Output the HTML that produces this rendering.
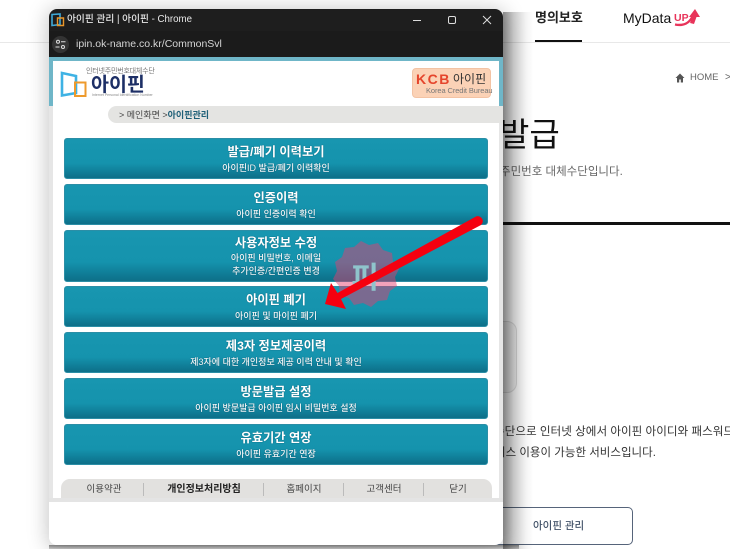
<!DOCTYPE html>
<html lang="ko">
<head>
<meta charset="utf-8">
<title>아이핀 관리</title>
<style>
html,body{margin:0;padding:0;width:730px;height:549px;overflow:hidden;background:#fff;}
body{position:relative;font-family:"Liberation Sans","Noto Sans CJK KR",sans-serif;filter:blur(.35px);}
.a{position:absolute;white-space:nowrap;line-height:1;}
.c{transform:translateX(-50%);}
#win{position:absolute;left:49px;top:9px;width:454px;height:536px;border-radius:8px;overflow:hidden;background:#fff;}
#shadow{position:absolute;left:49px;top:9px;width:454px;height:536px;border-radius:8px;box-shadow:0 2px 20px 2px rgba(0,0,0,.22);}
#rs{position:absolute;left:503px;top:12px;width:30px;height:537px;background:linear-gradient(90deg,rgba(0,0,0,.42),rgba(0,0,0,.2) 35%,rgba(0,0,0,.05) 75%,rgba(0,0,0,0));}
#bs{position:absolute;left:49px;top:545px;width:470px;height:4px;background:linear-gradient(rgba(0,0,0,.45),rgba(0,0,0,.18));}
.btn{position:absolute;left:64px;width:424px;border-radius:3px;box-sizing:border-box;background:linear-gradient(#1896b0 0,#1593ad 62%,#0f7a94 88%,#0e6f88 100%);border:1px solid #2b8ea6;text-align:center;color:#fff;}
.btn b{display:block;font-size:12.25px;font-weight:700;line-height:15px;margin-top:6px;text-shadow:0 0 1px rgba(0,50,70,.7);}
.btn span{display:block;font-size:9px;font-weight:500;line-height:13px;margin-top:2px;color:#f0f6f8;text-shadow:0 0 1px rgba(0,50,70,.7);}
.btn.t b{margin-top:5px;}
.btn.t span{margin-top:1px;}
.ft{color:#444;font-size:9.5px;top:485px;}
.sep{position:absolute;top:483px;width:1px;height:13px;background:#bbb;}
</style>
</head>
<body>
<!-- background page -->
<div class="a" style="left:535px;top:11px;font-size:13px;font-weight:700;color:#222;">명의보호</div>
<div style="position:absolute;left:535px;top:40px;width:47px;height:2px;background:#111;"></div>
<div style="position:absolute;left:0;top:42px;width:730px;height:1px;background:#e8e8e8;"></div>
<div class="a" style="left:623px;top:11px;font-size:14px;color:#111;">MyData</div>
<div class="a" style="left:674px;top:13px;font-size:10.5px;font-weight:700;color:#e8345a;">UP</div>
<svg style="position:absolute;left:674px;top:8px" width="28" height="19" viewBox="0 0 28 19"><path d="M1 16.500C9 18 16 15.500 19 7" fill="none" stroke="#e8345a" stroke-width="2.400"/><path d="M21 1l5 8h-3.500l-2.500 7-4-1 2.500-6H15z" fill="#e8345a"/></svg>
<svg style="position:absolute;left:675px;top:73px" width="10" height="10" viewBox="0 0 10 10"><path d="M5 .5 .5 5H2v4.500h2.200V6.500h1.600v3H8V5h1.500z" fill="#555"/></svg>
<div class="a" style="left:690px;top:73px;font-size:9.500px;color:#666;">HOME</div>
<div class="a" style="left:725px;top:73px;font-size:10px;color:#666;">&gt;</div>
<div class="a" style="left:499px;top:118px;font-size:33px;color:#111;">발급</div>
<div class="a" style="left:500px;top:167px;font-size:11.5px;color:#666;">주민번호 대체수단입니다.</div>
<div style="position:absolute;left:500px;top:222px;width:230px;height:3px;background:#111;"></div>
<div style="position:absolute;left:480px;top:321px;width:37px;height:72px;border:1px solid #ddd;border-radius:10px;box-sizing:border-box;background:#f4f4f4;"></div>
<div class="a" style="left:494px;top:426px;font-size:11.6px;color:#333;">수단으로 인터넷 상에서 아이핀 아이디와 패스워드</div>
<div class="a" style="left:495px;top:448px;font-size:11.5px;color:#333;">비스 이용이 가능한 서비스입니다.</div>
<div style="position:absolute;left:470px;top:507px;width:163px;height:38px;border:1.500px solid #56647a;border-radius:5px;box-sizing:border-box;background:#fff;"></div>
<div class="a" style="left:533px;top:521px;font-size:10.5px;font-weight:500;color:#44546a;">아이핀 관리</div>

<div id="shadow"></div>
<div id="rs"></div>
<div id="bs"></div>
<!-- popup window -->
<div id="win">
  <div style="position:absolute;left:0;top:0;width:454px;height:48px;background:#1e1e1e;"></div>
  <div style="position:absolute;left:0;top:22px;width:454px;height:26px;background:#1b1b1b;"></div>
  <div style="position:absolute;left:0;top:48px;width:454px;height:50px;background:#6fb6c8;"></div>
  <div style="position:absolute;left:4px;top:52px;width:446px;height:46px;background:#fff;"></div>
  <div style="position:absolute;left:0;top:97px;width:454px;height:393px;background:#e6e6e6;"></div>
  <div style="position:absolute;left:4px;top:97px;width:446px;height:392px;background:#fff;"></div>
  <div style="position:absolute;left:59px;top:97px;width:395px;height:17px;background:#e4e4e2;border-radius:9px 0 0 9px;"></div>
</div>
<svg style="position:absolute;left:51px;top:13px" width="14" height="14" viewBox="0 0 14 14"><path d="M1 1.500 9 1v10.500L1 12.500z" fill="none" stroke="#3fa9d8" stroke-width="1.600"/><path d="M6.500 5H12.500V12.500H6.500z" fill="none" stroke="#e8962a" stroke-width="1.400"/></svg>
<div class="a" style="left:67px;top:15px;font-size:9.700px;font-weight:500;color:#e8e8e8;">아이핀 관리 | 아이핀 - Chrome</div>
<svg style="position:absolute;left:410px;top:12px" width="86" height="16" viewBox="0 0 86 16" fill="none" stroke="#ddd" stroke-width="1"><path d="M3 8.500H11"/><rect x="38.500" y="4.500" width="7" height="7" rx="1.500"/><path d="M73 4l8 8M81 4l-8 8"/></svg>
<div style="position:absolute;left:52px;top:36px;width:17px;height:17px;border-radius:50%;background:#343434;"></div>
<svg style="position:absolute;left:55px;top:39px" width="11" height="11" viewBox="0 0 11 11" fill="none" stroke="#ddd" stroke-width="1"><circle cx="3" cy="2.800" r="1.500"/><path d="M6 2.800h4.500M.5 8h4"/><circle cx="8" cy="8" r="1.500"/></svg>
<div class="a" style="left:76px;top:39px;font-size:10.500px;color:#d6d6d6;">ipin.ok-name.co.kr/CommonSvl</div>

<!-- logo -->
<svg style="position:absolute;left:60px;top:71px" width="28" height="27" viewBox="0 0 28 27" fill="none"><path d="M2 2 16 5V22L2 24.500z" stroke="#3eb2e4" stroke-width="2.600"/><path d="M15 11.500H25.500V25H15z" stroke="#ee9a2c" stroke-width="2"/></svg>
<div class="a" style="left:86px;top:68px;font-size:7px;color:#777;letter-spacing:-.2px;">인터넷주민번호대체수단</div>
<div class="a" style="left:91px;top:76px;font-size:19.500px;font-weight:700;color:#1d2f66;">아이핀</div>
<div class="a" style="left:92px;top:94px;font-size:3.500px;color:#888;">Internet Personal Identification Number</div>
<!-- KCB -->
<div style="position:absolute;left:412px;top:68px;width:79px;height:30px;border-radius:4px;background:#fbd2b6;border:1px solid #f3c3a4;box-sizing:border-box;"></div>
<div class="a" style="left:416px;top:72px;font-size:14px;font-weight:700;color:#e5452c;letter-spacing:1.500px;">KCB</div>
<div class="a" style="left:453px;top:73px;font-size:12px;color:#333;">아이핀</div>
<div class="a" style="left:426px;top:87px;font-size:7.500px;color:#777;letter-spacing:-.1px;">Korea Credit Bureau</div>
<!-- breadcrumb -->
<div class="a" style="left:119px;top:111px;font-size:9px;color:#444;">&gt; 메인화면 &gt;<b style="color:#1d5f78;">아이핀관리</b></div>

<div class="btn" style="top:138px;height:41px;"><b>발급/폐기 이력보기</b><span>아이핀ID 발급/폐기 이력확인</span></div>
<div class="btn" style="top:184px;height:41px;"><b>인증이력</b><span>아이핀 인증이력 확인</span></div>
<div class="btn t" style="top:230px;height:52px;"><b>사용자정보 수정</b><span>아이핀 비밀번호, 이메일<br>추가인증/간편인증 변경</span></div>
<div class="btn" style="top:286px;height:41px;"><b>아이핀 폐기</b><span>아이핀 및 마이핀 폐기</span></div>
<div class="btn" style="top:332px;height:41px;"><b>제3자 정보제공이력</b><span>제3자에 대한 개인정보 제공 이력 안내 및 확인</span></div>
<div class="btn" style="top:378px;height:41px;"><b>방문발급 설정</b><span>아이핀 방문발급 아이핀 임시 비밀번호 설정</span></div>
<div class="btn" style="top:424px;height:41px;"><b>유효기간 연장</b><span>아이핀 유효기간 연장</span></div>

<!-- footer -->
<div style="position:absolute;left:61px;top:479px;width:431px;height:19px;background:#e2e1df;border-radius:9px 9px 0 0;"></div>
<div style="position:absolute;left:49px;top:498px;width:454px;height:4px;background:#e4e4e4;"></div>
<div class="a c ft" style="left:104px;">이용약관</div>
<div class="a c ft" style="left:204px;font-weight:700;font-size:10px;color:#222;">개인정보처리방침</div>
<div class="a c ft" style="left:304px;">홈페이지</div>
<div class="a c ft" style="left:384px;">고객센터</div>
<div class="a c ft" style="left:458px;">닫기</div>
<div class="sep" style="left:143px"></div><div class="sep" style="left:263px"></div><div class="sep" style="left:343px"></div><div class="sep" style="left:423px"></div>

<!-- stamp + arrow -->
<svg style="position:absolute;left:325px;top:210px" width="170" height="110" viewBox="325 210 170 110">
<path d="M361 241l8 4 9-2 5 7 9 3 1 9 6 7-4 8 2 9-7 5-3 9-9 1-7 6-8-4-9 2-5-7-9-3-1-9-6-7 4-8-2-9 7-5 3-9 9-1z" fill="#e63c6e" fill-opacity=".48"/>
<text x="365" y="288" text-anchor="middle" font-family="'Liberation Sans','Noto Sans CJK KR',sans-serif" font-size="30" font-weight="700" fill="#8fc4cc">피</text>
<path d="M325 304 331 283 337.500 293 476 216.500a5 5 0 0 1 5 8.500L341 299 346 309z" fill="#f5000f"/>
</svg>
</body>
</html>
